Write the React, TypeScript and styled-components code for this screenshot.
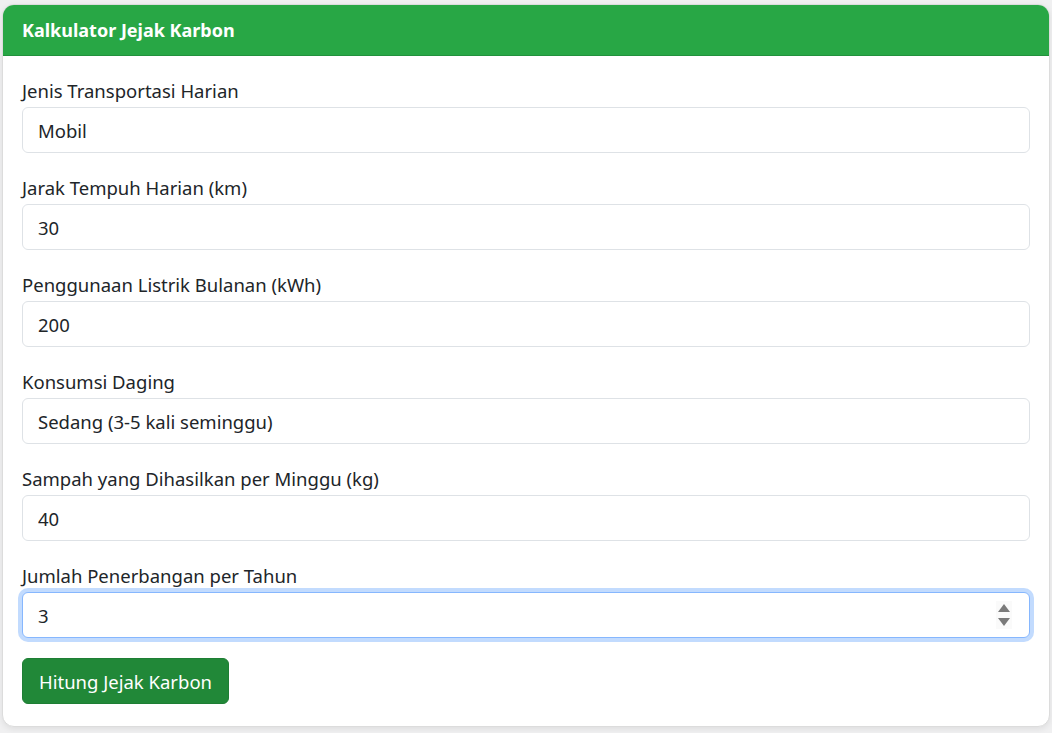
import React from "react";
import styled, { createGlobalStyle } from "styled-components";

const Global = createGlobalStyle`
  html, body { margin: 0; padding: 0; }
  body {
    background: #f0f0f1;
    font-family: "Noto Sans", "Open Sans", sans-serif;
    color: #212529;
  }
  * { box-sizing: border-box; }
`;

const Page = styled.div`
  padding: 4px 2px 8px 2px;
`;

const Card = styled.div`
  background: #fff;
  border: 1px solid #dcdcdc;
  border-radius: 12px;
  overflow: hidden;
  box-shadow: 0 2px 6px rgba(0, 0, 0, 0.08);
`;

const Header = styled.div`
  background: #28a745;
  color: #fff;
  height: 51px;
  display: flex;
  align-items: center;
  padding: 0 19px;
  font-weight: 700;
  font-size: 18px;
  border-bottom: 1px solid #22913c;
`;

const Body = styled.form`
  padding: 19px 19px 22px 19px;
  display: flex;
  flex-direction: column;
`;

const Group = styled.div`
  display: flex;
  flex-direction: column;
  margin-bottom: 19px;
`;

const Label = styled.label`
  font-size: 18.5px;
  line-height: 27px;
  padding-top: 2px;
  margin-bottom: 3px;
`;

const FieldWrap = styled.div`
  position: relative;
`;

const Input = styled.input<{ $focus?: boolean }>`
  display: block;
  width: 100%;
  height: 46px;
  padding: 0 15px;
  font-family: inherit;
  font-size: 18.5px;
  color: #212529;
  background: #fff;
  border: 1px solid ${(p) => (p.$focus ? "#86b7fe" : "#dee2e6")};
  border-radius: 6px;
  outline: none;
  box-shadow: ${(p) => (p.$focus ? "0 0 0 4px rgba(13,110,253,0.25)" : "none")};
`;

const Spinner = styled.div`
  position: absolute;
  right: 18px;
  top: 50%;
  transform: translateY(-50%);
  width: 16px;
  height: 28px;
  display: flex;
  flex-direction: column;
  align-items: center;
  justify-content: space-between;
  padding: 3px 0;
  background: #fafafa;
`;

const Button = styled.button`
  align-self: flex-start;
  margin-top: 1px;
  height: 46px;
  padding: 0 16px;
  font-family: inherit;
  font-size: 18.5px;
  color: #fff;
  background: #218838;
  border: 1px solid #1e7e34;
  border-radius: 6px;
  cursor: pointer;
`;

const fields = [
  { label: "Jenis Transportasi Harian", value: "Mobil" },
  { label: "Jarak Tempuh Harian (km)", value: "30" },
  { label: "Penggunaan Listrik Bulanan (kWh)", value: "200" },
  { label: "Konsumsi Daging", value: "Sedang (3-5 kali seminggu)" },
  { label: "Sampah yang Dihasilkan per Minggu (kg)", value: "40" },
];

export default function App() {
  return (
    <>
      <Global />
      <Page>
        <Card>
          <Header>Kalkulator Jejak Karbon</Header>
          <Body onSubmit={(e) => e.preventDefault()}>
            {fields.map((f) => (
              <Group key={f.label}>
                <Label>{f.label}</Label>
                <Input defaultValue={f.value} readOnly />
              </Group>
            ))}
            <Group>
              <Label>Jumlah Penerbangan per Tahun</Label>
              <FieldWrap>
                <Input $focus defaultValue="3" readOnly />
                <Spinner>
                  <svg width="12" height="8" viewBox="0 0 12 8">
                    <path d="M6 0 L12 8 L0 8 Z" fill="#7a7a7a" />
                  </svg>
                  <svg width="12" height="8" viewBox="0 0 12 8">
                    <path d="M0 0 L12 0 L6 8 Z" fill="#7a7a7a" />
                  </svg>
                </Spinner>
              </FieldWrap>
            </Group>
            <Button type="submit">Hitung Jejak Karbon</Button>
          </Body>
        </Card>
      </Page>
    </>
  );
}
